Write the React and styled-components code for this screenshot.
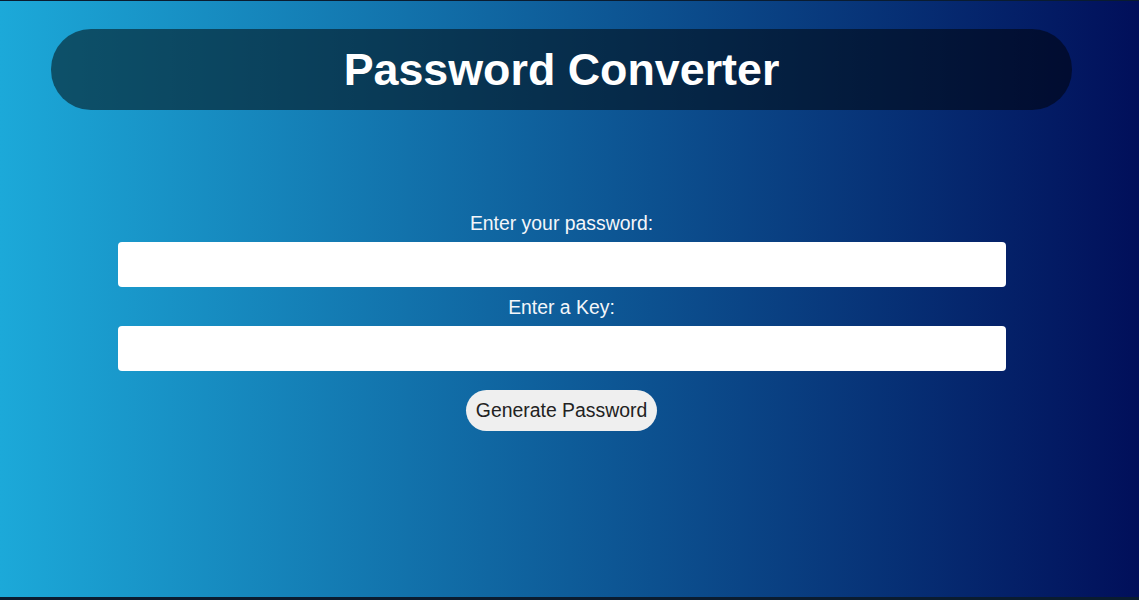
import React, { useState } from 'react';
import styled, { createGlobalStyle } from 'styled-components';

const GlobalStyle = createGlobalStyle`
  html, body {
    margin: 0;
    padding: 0;
    background: #0a1c30;
  }
  body {
    font-family: "Liberation Sans", Arial, sans-serif;
  }
`;

const Page = styled.div`
  margin-top: 1px;
  height: 596px;
  background: linear-gradient(to right, #1ca9d9 0%, #0e5c99 50%, #010f5a 100%);
  overflow: hidden;
`;

const Main = styled.div`
  width: 1123px;
  display: flex;
  flex-direction: column;
  align-items: center;
`;

const Header = styled.header`
  box-sizing: border-box;
  margin-top: 28px;
  width: 1021px;
  height: 81px;
  border-radius: 40px;
  background: rgba(0, 0, 0, 0.5);
  display: flex;
  align-items: center;
  justify-content: center;
`;

const Title = styled.h1`
  margin: 0;
  color: #ffffff;
  font-size: 44.8px;
  font-weight: 700;
  line-height: 1;
`;

const Form = styled.form`
  margin-top: 102px;
  width: 888px;
  display: flex;
  flex-direction: column;
  align-items: center;
`;

const Label = styled.label`
  display: block;
  color: #f4f6fa;
  font-size: 19.4px;
  line-height: 22px;
  margin-bottom: 8px;
`;

const Field = styled.input`
  box-sizing: border-box;
  width: 100%;
  height: 45px;
  border: none;
  border-radius: 4px;
  background: #ffffff;
  padding: 0 12px;
  font-size: 18px;
  font-family: inherit;
  margin-bottom: ${(p) => (p.$last ? '19px' : '9px')};
  outline: none;
`;

const Button = styled.button`
  height: 41px;
  padding: 0 10px;
  border: none;
  border-radius: 21px;
  background: #efefef;
  color: #222222;
  font-family: inherit;
  font-size: 19.4px;
  cursor: pointer;
`;

const App = () => {
  const [password, setPassword] = useState('');
  const [key, setKey] = useState('');

  return (
    <>
      <GlobalStyle />
      <Page>
        <Main>
          <Header>
            <Title>Password Converter</Title>
          </Header>
          <Form onSubmit={(e) => e.preventDefault()}>
            <Label htmlFor="password">Enter your password:</Label>
            <Field
              id="password"
              value={password}
              onChange={(e) => setPassword(e.target.value)}
            />
            <Label htmlFor="key">Enter a Key:</Label>
            <Field
              id="key"
              $last
              value={key}
              onChange={(e) => setKey(e.target.value)}
            />
            <Button type="submit">Generate Password</Button>
          </Form>
        </Main>
      </Page>
    </>
  );
};

export default App;
